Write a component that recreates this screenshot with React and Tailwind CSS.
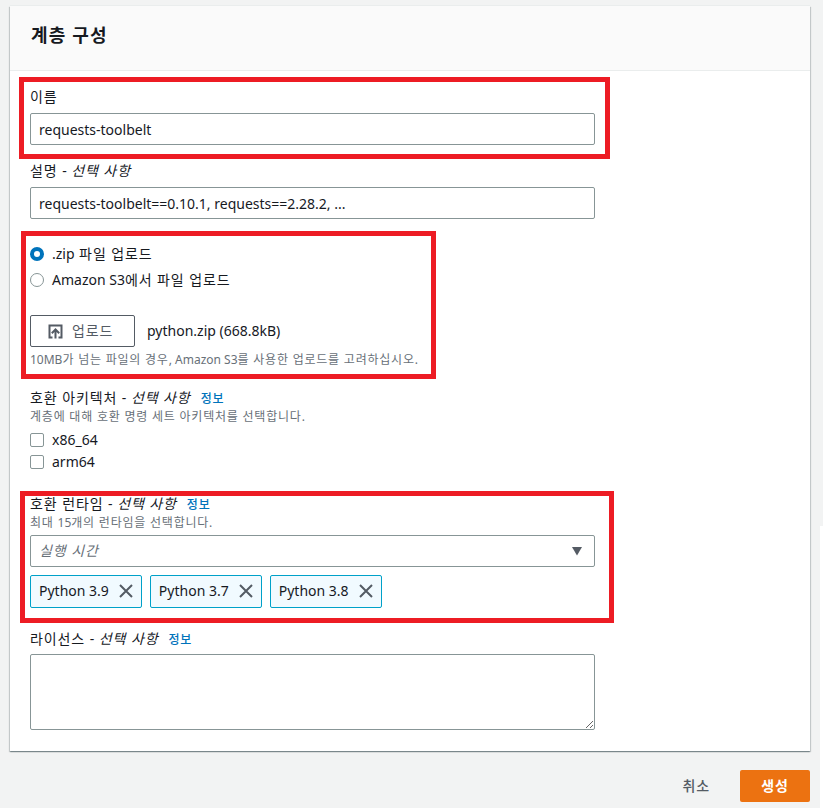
const fontStack = "font-['Noto_Sans','Noto_Sans_CJK_KR',sans-serif]";

// hangul runs are set a bit wider than Noto gives them
const Ko = ({ children }) =>
  children.split(/([가-힣 ]+)/).map((run, i) =>
    /[가-힣]/.test(run) ? (
      <span key={i} className="tracking-[0.065em]">
        {run}
      </span>
    ) : (
      run
    )
  );

const Optional = () => (
  <i className="italic">
    <Ko> 선택 사항</Ko>
  </i>
);

const Info = () => (
  <a className="ml-[10px] text-xs font-medium text-[#0073bb]">
    <Ko>정보</Ko>
  </a>
);

const Label = ({ children, className = "" }) => (
  <div className={`text-sm leading-[22px] text-[#16191f] ${className}`}>{children}</div>
);

const Hint = ({ children, className = "" }) => (
  <div className={`text-xs text-[#687078] ${className}`}>
    <Ko>{children}</Ko>
  </div>
);

const TextInput = ({ value }) => (
  <div className="flex h-8 w-[565px] items-center rounded-[2px] border border-[#879596] bg-white px-2 pt-px text-sm text-[#16191f]">
    {value}
  </div>
);

const Radio = ({ checked, label }) => (
  <div className="flex h-[26px] items-center gap-2 text-sm text-[#16191f]">
    {checked ? (
      <span className="size-[14px] shrink-0 rounded-full border-[4px] border-[#0073bb] bg-white" />
    ) : (
      <span className="size-[14px] shrink-0 rounded-full border border-[#879596] bg-white" />
    )}
    <span>
      <Ko>{label}</Ko>
    </span>
  </div>
);

const Checkbox = ({ label }) => (
  <div className="flex h-[22px] items-center gap-2 text-sm text-[#16191f]">
    <span className="size-[14px] shrink-0 rounded-[2px] border border-[#879596] bg-white" />
    {label}
  </div>
);

const Token = ({ label }) => (
  <div className="flex h-[33px] items-center gap-[10px] rounded-[2px] border border-[#00a1c9] bg-[#f1faff] px-2 pb-px text-sm text-[#16191f]">
    {label}
    <svg width="14" height="14" viewBox="0 0 14 14" fill="none" stroke="#545b64" strokeWidth="2">
      <path d="M1 1l12 12M13 1 1 13" />
    </svg>
  </div>
);

const RedBox = ({ className }) => (
  <div className={`pointer-events-none absolute border-[5px] border-[#ed1c24] ${className}`} />
);

export default function App() {
  return (
    <div className={`relative h-[808px] w-[823px] overflow-hidden bg-[#f2f3f3] pl-[10px] pt-[6px] ${fontStack}`}>
      <div className="w-[800px] bg-white shadow-[0_1px_1px_0_rgba(0,28,36,0.3),1px_1px_1px_0_rgba(0,28,36,0.15),-1px_1px_1px_0_rgba(0,28,36,0.15),0_-1px_0_0_#eaeded]">
        <div className="flex h-[65px] items-center border-b border-[#eaeded] bg-[#fafafa] pb-[7px] pl-[21px]">
          <h1 className="text-lg font-bold text-[#16191f]">
            <Ko>계층 구성</Ko>
          </h1>
        </div>

        <div className="pl-5 pb-[21px]">
          <Label className="mt-[15px] mb-[5px]">
            <Ko>이름</Ko>
          </Label>
          <TextInput value="requests-toolbelt" />

          <Label className="mt-[15px] mb-[5px]">
            <Ko>설명 -</Ko>
            <Optional />
          </Label>
          <TextInput value="requests-toolbelt==0.10.1, requests==2.28.2, ..." />

          <div className="mt-[22px]">
            <Radio checked label=".zip 파일 업로드" />
            <Radio label="Amazon S3에서 파일 업로드" />
          </div>

          <div className="mt-[22px] flex items-center gap-3">
            <div className="flex h-8 w-[105px] items-center gap-[9px] rounded-[2px] border border-[#545b64] bg-white pl-[17px] text-sm text-[#545b64]">
              <svg width="15" height="15" viewBox="0 0 15 15" fill="none" stroke="#545b64" strokeWidth="2" className="shrink-0">
                <path d="M4.5 13.5H1.5V1.5h12v12h-3" />
                <path d="M7.5 14.5V5.5M3.8 9.2l3.7-3.7 3.7 3.7" />
              </svg>
              <span>
                <Ko>업로드</Ko>
              </span>
            </div>
            <span className="text-sm text-[#16191f]">python.zip (668.8kB)</span>
          </div>
          <Hint className="mt-1 leading-[18px]">10MB가 넘는 파일의 경우, Amazon S3를 사용한 업로드를 고려하십시오.</Hint>

          <Label className="mt-[18px]">
            <Ko>호환 아키텍처 -</Ko>
            <Optional />
            <Info />
          </Label>
          <Hint className="leading-[16px]">계층에 대해 호환 명령 세트 아키텍처를 선택합니다.</Hint>
          <div className="mt-1">
            <Checkbox label="x86_64" />
            <Checkbox label="arm64" />
          </div>

          <Label className="mt-5">
            <Ko>호환 런타임 -</Ko>
            <Optional />
            <Info />
          </Label>
          <Hint className="leading-[16px]">최대 15개의 런타임을 선택합니다.</Hint>
          <div className="mt-1 flex h-8 w-[565px] items-center justify-between rounded-[2px] border border-[#879596] bg-white pl-2 pr-[11px] text-sm italic text-[#687078]">
            <span>
              <Ko>실행 시간</Ko>
            </span>
            <svg width="12" height="9" viewBox="0 0 12 9" fill="#545b64">
              <path d="M1 0h10L6 8.5z" />
            </svg>
          </div>
          <div className="mt-2 flex gap-2">
            <Token label="Python 3.9" />
            <Token label="Python 3.7" />
            <Token label="Python 3.8" />
          </div>

          <Label className="mt-5 mb-1">
            <Ko>라이선스 -</Ko>
            <Optional />
            <Info />
          </Label>
          <textarea readOnly className="block h-[76px] w-[565px] rounded-[2px] border border-[#879596] bg-white" />
        </div>
      </div>

      <div className="mt-[19px] flex h-8 w-[800px] items-center justify-end gap-[30px]">
        <span className="text-sm font-medium text-[#545b64]">
          <Ko>취소</Ko>
        </span>
        <div className="flex h-8 w-[70px] items-center justify-center rounded-[2px] bg-[#ec7211] text-sm font-bold text-white">
          <Ko>생성</Ko>
        </div>
      </div>

      <RedBox className="left-[19px] top-[77px] h-[82px] w-[591px]" />
      <RedBox className="left-[21px] top-[231px] h-[148px] w-[415px]" />
      <RedBox className="left-[20px] top-[491px] h-[132px] w-[594px]" />
      <div className="absolute bottom-0 right-0 top-[526px] w-[3px] bg-white" />
    </div>
  );
}
